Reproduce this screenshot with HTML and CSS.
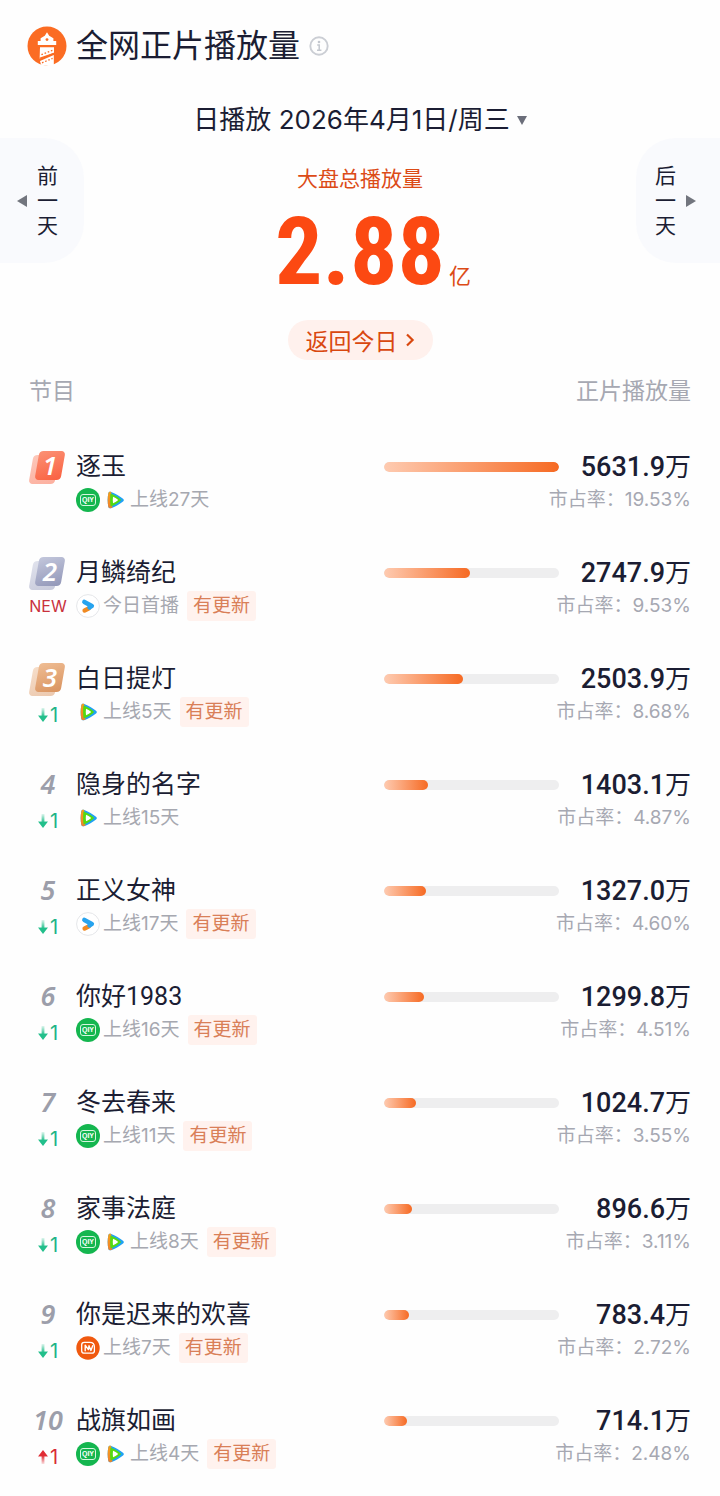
FILE: index.html
```html
<!DOCTYPE html>
<html lang="zh-CN">
<head>
    <meta charset="UTF-8">
    <meta name="viewport" content="width=device-width, initial-scale=1">
    <title>全网正片播放量</title>
    <link rel="stylesheet" href="styles.css">
</head>
<body>
    <!-- 图标库 -->
    <svg class="sprite" aria-hidden="true">
        <defs>
            <linearGradient id="tx-left" x1="0" y1="0" x2="0" y2="1">
                <stop offset="0" stop-color="#f3a01c"/>
                <stop offset="1" stop-color="#f0802c"/>
            </linearGradient>
            <linearGradient id="down" x1="0" y1="0" x2="0" y2="1">
                <stop offset="0" stop-color="#22bf8b" stop-opacity="0.15"/>
                <stop offset="0.6" stop-color="#22bf8b"/>
            </linearGradient>
            <linearGradient id="up" x1="0" y1="0" x2="0" y2="1">
                <stop offset="0.4" stop-color="#e02c34"/>
                <stop offset="1" stop-color="#e02c34" stop-opacity="0.15"/>
            </linearGradient>
        </defs>
        <symbol id="tencent" viewBox="0 0 24 24">
            <path d="M5.400 5C5.800 3.600 7.200 3.600 8.800 4.200c3.800 1.500 7.800 3.800 10.900 6.200 1.500 1.100 1.500 2.300 0 3.400-3.100 2.400-7.100 4.700-10.900 6.100-1.600.6-3 .5-3.400-.9-1-4.200-1-9.600 0-14z" fill="#1fa2f2"/>
            <path d="M5.400 5C5.800 3.600 7 3.600 8.200 4l1.200 15.600c-2 .9-3.600.8-4-.6-1-4.200-1-9.600 0-14z" fill="url(#tx-left)"/>
            <path d="M7.400 5.600c3.400 1 7 3.100 9.800 5.400.9.700.9 1.300 0 2-2.800 2.300-6.400 4.400-9.600 5.600-.6-4.200-.6-9-.2-13z" fill="#52da12"/>
            <path d="M10 8.800c1.900.8 3.400 1.700 4.700 2.700.4.300.4.700 0 1-1.300 1-2.800 1.900-4.700 2.700-.3-2.100-.3-4.300 0-6.400z" fill="#fff"/>
        </symbol>
        <symbol id="youku" viewBox="0 0 24 24">
            <circle cx="12" cy="12" r="11.400" fill="#fff" stroke="#e2e3e7" stroke-width="0.9"/>
            <path d="M8.600 16.500l4-1.900" stroke="#f08a22" stroke-width="4.400" stroke-linecap="round"/>
            <path d="M8.400 7.900l7.400 4-2.200 1.500" fill="none" stroke="#27a3ee" stroke-width="4.600" stroke-linecap="round" stroke-linejoin="round"/>
        </symbol>
        <symbol id="mango" viewBox="0 0 24 24">
            <circle cx="12" cy="12" r="11.700" fill="#f0590f"/>
            <path d="M8.200 17.200c-1.700 0-2.500-.9-2.500-2.500V8.800c0-1.600.8-2.500 2.500-2.500h5.600c2.800 0 4.600 1.800 4.600 4.500v3.900c0 1.600-.9 2.500-2.500 2.500H8.200" fill="none" stroke="#fff" stroke-width="1.300"/>
            <path d="M9.200 14.800V9.200l3.200 4.400.6-3.800 1.900 4.600 1.900-4.800" fill="none" stroke="#fff" stroke-width="1.400" stroke-linejoin="round" stroke-linecap="round"/>
        </symbol>
        <symbol id="arrow-down" viewBox="0 0 10 14">
            <path d="M3.600 0h2.800v7.400H10L5 14 0 7.400h3.600z" fill="url(#down)"/>
        </symbol>
        <symbol id="arrow-up" viewBox="0 0 10 14">
            <path d="M3.600 14h2.800V6.600H10L5 0 0 6.600h3.600z" fill="url(#up)"/>
        </symbol>
    </svg>

    <header class="page-header">
        <svg class="logo" viewBox="0 0 40 40" aria-hidden="true">
            <circle cx="20" cy="20" r="19.500" fill="#fb6c23"/>
            <path d="M20 6.200l2.200 3.600 4.200 2.400v2.800h2.800v4H10.800v-4h2.800v-2.800l4.200-2.400z" fill="#fff"/>
            <circle cx="20" cy="13.600" r="1.400" fill="#fb6c23"/>
            <path d="M13 21.200h14v5.600l-14.400 6z" fill="#fff"/>
            <path d="M26.800 29v10l-5 1-7.800-1.200-1-3.800z" fill="#fff"/>
            <path d="M14.400 28.600l11.400-4.400M15 36.800l10.600-4.400" stroke="#fb6c23" stroke-width="1.300" stroke-dasharray="1.600 1.800"/>
            <path d="M12.600 32.400l14.400-5" stroke="#fb6c23" stroke-width="1.400"/>
        </svg>
        <h1>全网正片播放量</h1>
        <svg class="info" viewBox="0 0 20 20" aria-hidden="true">
            <circle cx="10" cy="10" r="8.700" fill="none" stroke="#cbced4" stroke-width="1.900"/>
            <circle cx="10" cy="6" r="1.300" fill="#c3c7ce"/>
            <path d="M8.200 9h2v5M8 14.300h4.400" fill="none" stroke="#c3c7ce" stroke-width="1.500"/>
        </svg>
    </header>

    <button class="date-picker" type="button">日播放 2026年4月1日/周三 <span class="caret"></span></button>

    <section class="hero">
        <button class="day-btn prev" type="button"><span class="tri left"></span><span class="day-text">前一天</span></button>
        <div class="total">
            <p class="total-label">大盘总播放量</p>
            <p class="total-value"><strong>2.88</strong><span>亿</span></p>
            <button class="today-btn" type="button">返回今日
                <svg viewBox="0 0 10 14" aria-hidden="true"><path d="M2 1.500L7.600 7 2 12.500" fill="none" stroke="#d9480f" stroke-width="2.200"/></svg>
            </button>
        </div>
        <button class="day-btn next" type="button"><span class="day-text">后一天</span><span class="tri right"></span></button>
    </section>

    <div class="list-head"><span>节目</span><span>正片播放量</span></div>

    <ol class="list">
        <li class="row">
            <span class="rank medal gold">1</span>
            <h2>逐玉</h2>
            <div class="data"><div class="bar"><div class="fill" style="width: 100%"></div></div><span class="value"><b>5631.9</b>万</span></div>
            <span class="trend"></span>
            <div class="meta"><span class="icon iqiyi">QIY</span><svg class="icon"><use href="#tencent"/></svg><span>上线27天</span></div>
            <span class="share">市占率：19.53%</span>
        </li>
        <li class="row">
            <span class="rank medal silver">2</span>
            <h2>月鳞绮纪</h2>
            <div class="data"><div class="bar"><div class="fill" style="width: 49%"></div></div><span class="value"><b>2747.9</b>万</span></div>
            <span class="trend new">NEW</span>
            <div class="meta"><svg class="icon"><use href="#youku"/></svg><span>今日首播</span><span class="tag">有更新</span></div>
            <span class="share">市占率：9.53%</span>
        </li>
        <li class="row">
            <span class="rank medal bronze">3</span>
            <h2>白日提灯</h2>
            <div class="data"><div class="bar"><div class="fill" style="width: 45%"></div></div><span class="value"><b>2503.9</b>万</span></div>
            <span class="trend down"><svg class="arrow"><use href="#arrow-down"/></svg>1</span>
            <div class="meta"><svg class="icon"><use href="#tencent"/></svg><span>上线5天</span><span class="tag">有更新</span></div>
            <span class="share">市占率：8.68%</span>
        </li>
        <li class="row">
            <span class="rank">4</span>
            <h2>隐身的名字</h2>
            <div class="data"><div class="bar"><div class="fill" style="width: 25%"></div></div><span class="value"><b>1403.1</b>万</span></div>
            <span class="trend down"><svg class="arrow"><use href="#arrow-down"/></svg>1</span>
            <div class="meta"><svg class="icon"><use href="#tencent"/></svg><span>上线15天</span></div>
            <span class="share">市占率：4.87%</span>
        </li>
        <li class="row">
            <span class="rank">5</span>
            <h2>正义女神</h2>
            <div class="data"><div class="bar"><div class="fill" style="width: 24%"></div></div><span class="value"><b>1327.0</b>万</span></div>
            <span class="trend down"><svg class="arrow"><use href="#arrow-down"/></svg>1</span>
            <div class="meta"><svg class="icon"><use href="#youku"/></svg><span>上线17天</span><span class="tag">有更新</span></div>
            <span class="share">市占率：4.60%</span>
        </li>
        <li class="row">
            <span class="rank">6</span>
            <h2>你好1983</h2>
            <div class="data"><div class="bar"><div class="fill" style="width: 23%"></div></div><span class="value"><b>1299.8</b>万</span></div>
            <span class="trend down"><svg class="arrow"><use href="#arrow-down"/></svg>1</span>
            <div class="meta"><span class="icon iqiyi">QIY</span><span>上线16天</span><span class="tag">有更新</span></div>
            <span class="share">市占率：4.51%</span>
        </li>
        <li class="row">
            <span class="rank">7</span>
            <h2>冬去春来</h2>
            <div class="data"><div class="bar"><div class="fill" style="width: 18%"></div></div><span class="value"><b>1024.7</b>万</span></div>
            <span class="trend down"><svg class="arrow"><use href="#arrow-down"/></svg>1</span>
            <div class="meta"><span class="icon iqiyi">QIY</span><span>上线11天</span><span class="tag">有更新</span></div>
            <span class="share">市占率：3.55%</span>
        </li>
        <li class="row">
            <span class="rank">8</span>
            <h2>家事法庭</h2>
            <div class="data"><div class="bar"><div class="fill" style="width: 16%"></div></div><span class="value"><b>896.6</b>万</span></div>
            <span class="trend down"><svg class="arrow"><use href="#arrow-down"/></svg>1</span>
            <div class="meta"><span class="icon iqiyi">QIY</span><svg class="icon"><use href="#tencent"/></svg><span>上线8天</span><span class="tag">有更新</span></div>
            <span class="share">市占率：3.11%</span>
        </li>
        <li class="row">
            <span class="rank">9</span>
            <h2>你是迟来的欢喜</h2>
            <div class="data"><div class="bar"><div class="fill" style="width: 14%"></div></div><span class="value"><b>783.4</b>万</span></div>
            <span class="trend down"><svg class="arrow"><use href="#arrow-down"/></svg>1</span>
            <div class="meta"><svg class="icon"><use href="#mango"/></svg><span>上线7天</span><span class="tag">有更新</span></div>
            <span class="share">市占率：2.72%</span>
        </li>
        <li class="row">
            <span class="rank">10</span>
            <h2>战旗如画</h2>
            <div class="data"><div class="bar"><div class="fill" style="width: 13%"></div></div><span class="value"><b>714.1</b>万</span></div>
            <span class="trend up"><svg class="arrow"><use href="#arrow-up"/></svg>1</span>
            <div class="meta"><span class="icon iqiyi">QIY</span><svg class="icon"><use href="#tencent"/></svg><span>上线4天</span><span class="tag">有更新</span></div>
            <span class="share">市占率：2.48%</span>
        </li>
    </ol>
</body>
</html>
```

FILE: styles.css
```css
/* 基本样式 */
* {
    box-sizing: border-box;
    margin: 0;
    padding: 0;
}

body {
    font-family: Inter, "Noto Sans CJK SC", sans-serif;
    color: #1b1d33;
    background: #fefefe;
    padding: 24px 0 28px;
}

button {
    font: inherit;
    color: inherit;
    border: none;
    background: none;
    cursor: pointer;
}

.sprite {
    position: absolute;
    width: 0;
    height: 0;
}

/* 标题 */
.page-header {
    display: flex;
    align-items: center;
    gap: 9px;
    padding: 0 27px;
    height: 44px;
}

.logo {
    width: 40px;
    height: 40px;
}

h1 {
    font-size: 32px;
    font-weight: 400;
    line-height: 44px;
}

.info {
    width: 20px;
    height: 20px;
}

/* 日期 */
.date-picker {
    display: flex;
    align-items: center;
    gap: 7px;
    margin: 34px auto 0;
    font-size: 26px;
    line-height: 36px;
}

.caret {
    border: 5px solid transparent;
    border-top: 9px solid #6b6e7a;
    border-bottom: none;
}

/* 大盘 */
.hero {
    display: flex;
    justify-content: space-between;
    align-items: flex-start;
}

.day-btn {
    display: flex;
    align-items: center;
    gap: 10px;
    width: 84px;
    height: 125px;
    background: #f9fafd;
}

.prev {
    padding-left: 17px;
    border-radius: 0 40px 40px 0;
}

.next {
    padding-left: 19px;
    border-radius: 40px 0 0 40px;
}

.day-text {
    width: 21px;
    font-size: 21px;
    line-height: 25px;
}

.tri {
    border: 6px solid transparent;
}

.left {
    border-right: 10px solid #72757e;
    border-left: none;
}

.right {
    border-left: 10px solid #72757e;
    border-right: none;
}

.total {
    display: flex;
    flex-direction: column;
    align-items: center;
    padding-top: 26px;
    color: #dc4b17;
}

.total-label {
    font-size: 21px;
    line-height: 30px;
}

.total-value {
    display: flex;
    align-items: baseline;
    gap: 4px;
    height: 126px;
    padding-left: 26px;
    line-height: 116px;
}

.total-value strong {
    font-family: "Roboto Condensed", "Liberation Sans Narrow", sans-serif;
    font-size: 94px;
    color: #fc4912;
}

.total-value span {
    font-size: 22px;
}

.today-btn {
    display: flex;
    align-items: center;
    gap: 7px;
    height: 40px;
    padding: 0 18px;
    border-radius: 20px;
    background: #fff1ed;
    color: #d9480f;
    font-size: 23px;
}

.today-btn svg {
    width: 10px;
    height: 14px;
}

/* 列表 */
.list-head {
    display: flex;
    justify-content: space-between;
    margin-top: 15px;
    padding: 0 29px;
    font-size: 23px;
    line-height: 32px;
    color: #a6a8b2;
}

.list {
    display: grid;
    gap: 42px;
    margin-top: 44px;
    padding: 0 29px 0 28px;
    list-style: none;
}

.row {
    display: grid;
    grid-template-columns: 40px 1fr auto;
    grid-template-rows: 32px 30px;
    column-gap: 8px;
    row-gap: 2px;
    align-items: center;
}

h2 {
    font-family: Roboto, "Noto Sans CJK SC", sans-serif;
    font-size: 25px;
    font-weight: 400;
    line-height: 32px;
}

/* 名次 */
.rank {
    align-self: start;
    font-family: "Noto Sans", sans-serif;
    font-size: 27px;
    font-weight: 600;
    font-style: italic;
    line-height: 29px;
    text-align: center;
    color: #9c9eaa;
}

.medal {
    position: relative;
    z-index: 0;
    padding-left: 4px;
    font-size: 26px;
    color: #fff;
}

.medal::before,
.medal::after {
    content: "";
    position: absolute;
    z-index: -1;
    width: 26px;
    height: 29px;
    border-radius: 4px;
    transform: skewX(-10deg);
}

.medal::before {
    left: 3px;
    top: 4px;
    opacity: 0.5;
}

.medal::after {
    left: 9px;
    top: 0;
}

.gold::before,
.gold::after {
    background: linear-gradient(160deg, #fb9175, #fa6140);
}

.silver::before,
.silver::after {
    background: linear-gradient(160deg, #c3c7dc, #9297b8);
}

.bronze::before,
.bronze::after {
    background: linear-gradient(160deg, #efbd94, #d9935f);
}

/* 升降 */
.trend {
    display: flex;
    align-items: center;
    justify-content: center;
    gap: 2px;
    font-size: 20px;
    line-height: 30px;
}

.new {
    font-size: 16px;
    color: #c9303c;
}

.down {
    padding-top: 6px;
    color: #22b487;
}

.up {
    padding-top: 6px;
    color: #d92b36;
}

.arrow {
    width: 10px;
    height: 14px;
}

/* 平台与上线天数 */
.meta {
    display: flex;
    align-items: center;
    gap: 3px;
    font-size: 19px;
    line-height: 30px;
    color: #a6a8b0;
}

.icon {
    width: 24px;
    height: 24px;
}

.iqiyi {
    display: flex;
    align-items: center;
    justify-content: center;
    position: relative;
    border-radius: 50%;
    background: #14b64f;
    font-family: "Liberation Sans", sans-serif;
    font-size: 7px;
    font-weight: 700;
    line-height: 10px;
    color: #fff;
}

.iqiyi::before {
    content: "";
    position: absolute;
    inset: 6px 4px;
    border: 1px solid #d6f6e0;
    border-radius: 3px;
}

.tag {
    margin-left: 5px;
    padding: 0 6px;
    border-radius: 3px;
    background: #fff2ee;
    color: #d97f58;
}

/* 播放量 */
.data {
    display: flex;
    align-items: center;
    justify-content: space-between;
    width: 307px;
}

.bar {
    width: 175px;
    height: 10px;
    border-radius: 5px;
    background: #eeeeef;
    overflow: hidden;
}

.fill {
    height: 100%;
    border-radius: 5px;
    background: linear-gradient(90deg, #fecbb1, #f66a23);
}

.value {
    font-family: Roboto, "Noto Sans CJK SC", sans-serif;
    font-size: 26px;
    line-height: 32px;
}

.value b {
    font-size: 27px;
    font-weight: 500;
}

.share {
    font-size: 19px;
    line-height: 30px;
    text-align: right;
    color: #a6a8b2;
}
```
